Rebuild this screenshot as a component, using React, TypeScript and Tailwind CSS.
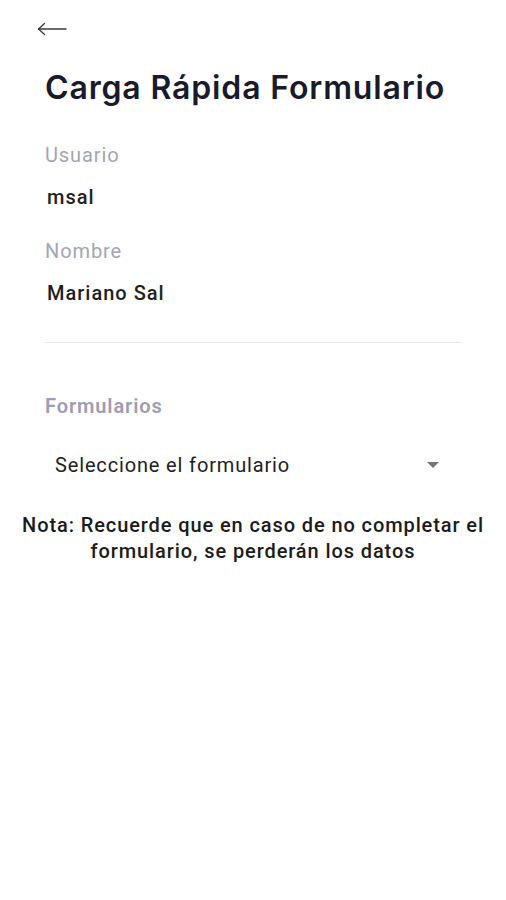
const App = () => {
  return (
    <div className="min-h-[900px] w-full bg-white font-['Roboto','Liberation_Sans',sans-serif] text-[#1f1f1f]">
      <div className="pl-[37px] pt-[22px]">
        <svg width="30" height="14" viewBox="0 0 30 14" fill="none" stroke="#3a3a3a" strokeWidth="1.3" strokeLinecap="round" strokeLinejoin="round">
          <path d="M1.5 7H29" />
          <path d="M7.5 1.5L1.5 7l6 5.5" />
        </svg>
      </div>

      <div className="px-[45px]">
        <h1 className="mt-[32px] font-['Inter',sans-serif] text-[32px] font-semibold leading-[40px] tracking-[0.85px] text-[#191b2d]">
          Carga Rápida Formulario
        </h1>

        <div className="mt-[35px] text-[20px] leading-[24px] tracking-[0.9px] text-[#a3a5b8]">Usuario</div>
        <div className="mt-[18px] pl-[2px] text-[20px] font-medium leading-[24px] tracking-[1px]">msal</div>

        <div className="mt-[30px] text-[20px] leading-[24px] tracking-[0.9px] text-[#a3a5b8]">Nombre</div>
        <div className="mt-[18px] pl-[2px] text-[20px] font-medium leading-[24px] tracking-[1px]">Mariano Sal</div>

        <div className="mt-[37px] h-px w-[417px] bg-[#e6e6ea]" />

        <div className="mt-[51px] text-[20px] font-semibold leading-[24px] tracking-[0.9px] text-[#9c9eb3]">Formularios</div>

        <div className="mt-[35px] flex items-center justify-between pl-[10px] pr-[22px]">
          <span className="text-[20px] leading-[24px] tracking-[0.85px] text-[#222]">Seleccione el formulario</span>
          <svg width="12" height="6" viewBox="0 0 12 6">
            <path d="M0 0h12L6 6z" fill="#757575" />
          </svg>
        </div>
      </div>

      <p className="mt-[35px] px-[12px] text-center text-[20px] font-medium leading-[26px] tracking-[0.9px] text-[#1c1c1c]">
        Nota: Recuerde que en caso de no completar el formulario, se perderán los datos
      </p>
    </div>
  )
}

export default App
